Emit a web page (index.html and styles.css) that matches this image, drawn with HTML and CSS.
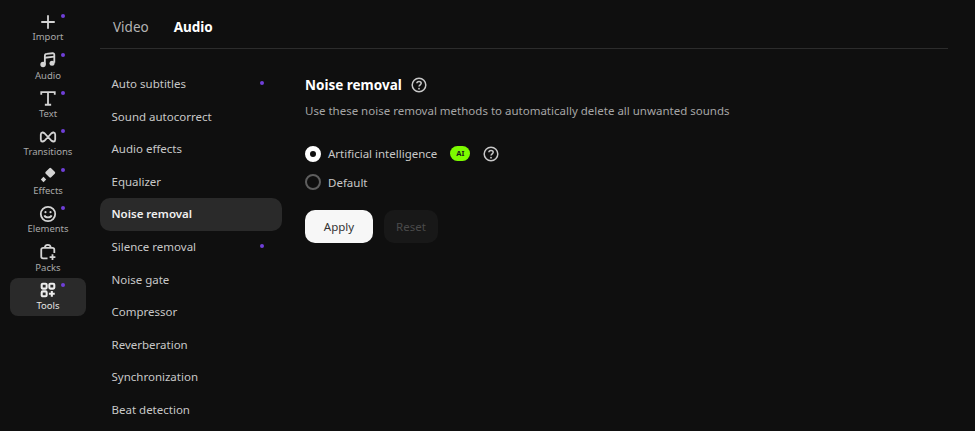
FILE: index.html
```html
<!DOCTYPE html>
<html lang="en">
<head>
<meta charset="utf-8">
<title>Noise removal</title>
<link rel="stylesheet" href="styles.css">
</head>
<body>
<div class="app">
  <nav class="rail">
    <a class="rail-item"><i class="dot"></i><svg viewBox="0 0 20 20"><path d="M10 2.500v15M2.500 10h15" class="s2"/></svg><span>Import</span></a>
    <a class="rail-item"><i class="dot"></i><svg viewBox="0 0 20 20"><path d="M6.500 15V5.500Q6.500 3.500 8.500 3.300L15 2.500Q17 2.300 17 4.300V13" class="s2"/><path d="M6.500 7.500L17 6.200" class="s2"/><circle cx="4.500" cy="15" r="3" class="f"/><circle cx="14.500" cy="13.500" r="2.800" class="f"/></svg><span>Audio</span></a>
    <a class="rail-item"><i class="dot"></i><svg viewBox="0 0 20 20"><path d="M2.500 6.500V3.500h15v3M10 3.500V17.500M6.500 17.500h7" class="s2"/></svg><span>Text</span></a>
    <a class="rail-item"><i class="dot"></i><svg viewBox="0 0 20 20"><path d="M10 10L6 5.800Q5 4.900 3.800 5 2 5.300 2 7.300v5.400q0 2 1.800 2.300 1.200.1 2.200-.8L10 10l4-4.200q1-.9 2.200-.8 1.800.3 1.800 2.300v5.400q0 2-1.800 2.300-1.200.1-2.200-.8z" class="s2"/></svg><span>Transitions</span></a>
    <a class="rail-item"><i class="dot"></i><svg viewBox="0 0 20 20"><path d="M12.500 2q.5 0 1 .5l4 4q.5.5.5 1t-.5 1l-4 4q-.5.5-1 .5t-1-.5l-4-4q-.5-.5-.5-1t.5-1l4-4q.5-.5 1-.5z" class="f"/><path d="M5 12l3 3-3 3-3-3z" class="f"/></svg><span>Effects</span></a>
    <a class="rail-item"><i class="dot"></i><svg viewBox="0 0 20 20"><circle cx="10" cy="10" r="8" class="s2"/><circle cx="7.200" cy="8" r="1.200" class="f"/><circle cx="12.800" cy="8" r="1.200" class="f"/><path d="M6 11.500c1 3 7 3 8 0" class="s2"/></svg><span>Elements</span></a>
    <a class="rail-item"><svg viewBox="0 0 20 20"><path d="M9.500 17H4.500a2 2 0 0 1-2-2V7.500a2 2 0 0 1 2-2h10.500a2 2 0 0 1 2 2V11" class="s2"/><path d="M6.500 5.500c0-4.500 6.500-4.500 6.500 0" class="s2"/><path d="M15 12.500V19M11.800 15.800h6.400" class="s2"/></svg><span>Packs</span></a>
    <a class="rail-item is-active"><i class="dot"></i><svg viewBox="0 0 20 20"><rect x="3" y="3" width="5.500" height="5.500" rx="1.200" class="s2b"/><rect x="11.500" y="3" width="5.500" height="5.500" rx="1.200" class="s2b"/><rect x="3" y="11.500" width="5.500" height="5.500" rx="1.200" class="s2b"/><path d="M14.250 11v6.500M11 14.250h6.500" class="s2b"/></svg><span>Tools</span></a>
  </nav>
  <main class="main">
    <header class="tabs">
      <a class="tab">Video</a>
      <a class="tab is-current">Audio</a>
    </header>
    <div class="panes">
      <ul class="menu">
        <li class="menu-item">Auto subtitles<i class="mark"></i></li>
        <li class="menu-item">Sound autocorrect</li>
        <li class="menu-item">Audio effects</li>
        <li class="menu-item">Equalizer</li>
        <li class="menu-item is-selected">Noise removal</li>
        <li class="menu-item">Silence removal<i class="mark"></i></li>
        <li class="menu-item">Noise gate</li>
        <li class="menu-item">Compressor</li>
        <li class="menu-item">Reverberation</li>
        <li class="menu-item">Synchronization</li>
        <li class="menu-item">Beat detection</li>
      </ul>
      <section class="detail">
        <h1 class="title">Noise removal<svg class="help" viewBox="0 0 16 16"><circle cx="8" cy="8" r="6.800" class="h"/><path d="M5.900 6.300C5.900 3.700 10.200 3.800 10.200 6.200 10.200 7.800 8 7.800 8 9.600" class="h"/><circle cx="8" cy="11.700" r="0.900" class="hf"/></svg></h1>
        <p class="desc">Use these noise removal methods to automatically delete all unwanted sounds</p>
        <div class="options">
          <label class="option"><i class="radio is-on"></i>Artificial intelligence<b class="badge">AI</b><svg class="help" viewBox="0 0 16 16"><circle cx="8" cy="8" r="6.800" class="h"/><path d="M5.900 6.300C5.900 3.700 10.200 3.800 10.200 6.200 10.200 7.800 8 7.800 8 9.600" class="h"/><circle cx="8" cy="11.700" r="0.900" class="hf"/></svg></label>
          <label class="option"><i class="radio"></i>Default</label>
        </div>
        <div class="actions">
          <button class="btn btn-apply">Apply</button>
          <button class="btn btn-reset">Reset</button>
        </div>
      </section>
    </div>
  </main>
</div>
</body>
</html>
```
FILE: styles.css
```css
* { box-sizing: border-box; }
html, body { margin: 0; height: 100%; }
body {
  background: #0f0f0f;
  color: #c9c9c9;
  font-family: "Noto Sans", sans-serif;
  overflow: hidden;
}
.app { display: flex; height: 431px; }
.rail {
  width: 100px;
  flex: none;
  padding: 9.200px 14px 0 10px;
  display: flex;
  flex-direction: column;
}
.rail-item {
  position: relative;
  height: 38.400px;
  flex: none;
  display: flex;
  flex-direction: column;
  align-items: center;
  padding-top: 3.500px;
  border-radius: 8px;
  color: #a9a9a9;
  font-size: 9.500px;
  line-height: 13px;
}
.rail-item svg { width: 18px; height: 18px; display: block; }
.rail-item span { margin-top: -0.500px; }
.rail-item.is-active { background: #2a2a2a; color: #e4e4e4; }
.s2 { fill: none; stroke: #d4d4d4; stroke-width: 2; }
.s2b { fill: none; stroke: #eeeeee; stroke-width: 2.300; }
.f { fill: #d4d4d4; }
.dot {
  position: absolute;
  left: 51px;
  top: 5px;
  width: 4px;
  height: 4px;
  border-radius: 50%;
  background: #6f3fd8;
}
.main { flex: 1; padding-right: 27px; min-width: 0; }
.tabs {
  height: 49px;
  border-bottom: 1px solid #2c2c2c;
  display: flex;
  align-items: center;
  gap: 25px;
  padding-left: 13px;
  padding-top: 6px;
  font-size: 13.500px;
}
.tab { color: #b4b4b4; }
.tab.is-current { color: #fff; font-weight: 700; }
.panes { display: flex; padding-top: 18.700px; }
.menu { list-style: none; margin: 0; padding: 0; width: 182px; flex: none; }
.menu-item {
  height: 32.600px;
  display: flex;
  align-items: center;
  justify-content: space-between;
  padding: 0 18px 1px 11.500px;
  border-radius: 10px;
  font-size: 11.500px;
  color: #c8c8c8;
}
.menu-item.is-selected { background: #2a2a2a; color: #f0f0f0; font-weight: 600; }
.mark { width: 4px; height: 4px; border-radius: 50%; background: #6f3fd8; }
.detail { padding-left: 23px; flex: 1; }
.title {
  margin: 7px 0 0;
  display: flex;
  align-items: center;
  gap: 9px;
  font-size: 13.500px;
  line-height: 20px;
  font-weight: 700;
  color: #fff;
}
.help { width: 16px; height: 16px; flex: none; }
.h { fill: none; stroke: #c8c8c8; stroke-width: 1.500; }
.hf { fill: #c8c8c8; }
.desc { margin: 7px 0 0; font-size: 11.500px; line-height: 18px; color: #a6a6a6; }
.options { margin-top: 23px; display: flex; flex-direction: column; gap: 6px; }
.option { display: flex; align-items: center; height: 22.500px; font-size: 11.500px; color: #c8c8c8; }
.radio {
  width: 16px;
  height: 16px;
  border-radius: 50%;
  border: 2px solid #5e5e5e;
  margin-right: 7px;
  flex: none;
}
.radio.is-on { background: #0f0f0f; border: 5px solid #fff; }
.badge {
  margin: 0 13px;
  width: 20px;
  height: 15px;
  border-radius: 7.500px;
  background: #7dfb00;
  color: #1a1a1a;
  font-size: 7.500px;
  line-height: 15px;
  text-align: center;
  font-weight: 700;
}
.actions { margin-top: 16px; display: flex; gap: 11px; }
.btn {
  height: 33px;
  border: 0;
  border-radius: 10px;
  font-family: inherit;
  font-size: 11.500px;
  padding: 0;
}
.btn-apply { width: 68px; background: #f7f7f7; color: #333; }
.btn-reset { width: 54px; background: #181818; color: #4a4a4a; }
```
